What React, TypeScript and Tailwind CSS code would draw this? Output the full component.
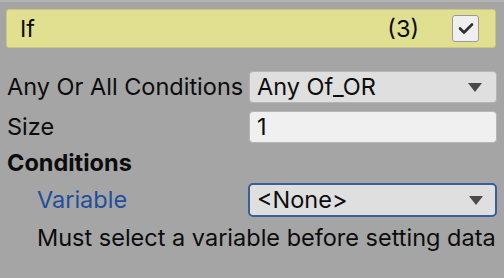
import React from "react";

function Arrow() {
  return (
    <svg width="14" height="9" viewBox="0 0 14 9">
      <polygon points="0,0 14,0 7,9" fill="#4a4a4a" />
    </svg>
  );
}

export default function App() {
  return (
    <div
      className="w-[504px] h-[278px] bg-[#a5a5a5] overflow-hidden text-[#0c0c0c] text-[23.5px]"
      style={{ fontFamily: "Inter, 'Noto Sans', sans-serif" }}
    >
      <div className="h-[2px] bg-[#b2b2b2]" />
      <div className="mt-[7px] ml-[6px] mr-[8px] h-[39px] rounded-[3px] bg-[#e1df90] border border-[#c9c67e] flex items-center pl-[13px] pr-[16px]">
        <span className="flex-1">If</span>
        <span className="mr-[33px]">(3)</span>
        <div className="w-[27px] h-[27px] rounded-[3px] bg-[#efefef] border border-[#9a9a9a] flex items-center justify-center">
          <svg width="16" height="13" viewBox="0 0 16 13">
            <polyline points="2,6.5 6,10.5 14,2.5" fill="none" stroke="#2e2e2e" strokeWidth="2.6" strokeLinecap="round" strokeLinejoin="round" />
          </svg>
        </div>
      </div>

      <div className="mt-[23px] flex items-center h-[32px]">
        <span className="w-[249px] pl-[7px] shrink-0 whitespace-nowrap">Any Or All Conditions</span>
        <div className="w-[248px] h-[32px] rounded-[4px] bg-[#dfdfdf] border border-[#b5b5b5] flex items-center pl-[7px] pr-[14px]">
          <span className="flex-1">Any Of_OR</span>
          <Arrow />
        </div>
      </div>

      <div className="mt-[8px] flex items-center h-[32px]">
        <span className="w-[249px] pl-[7px] shrink-0">Size</span>
        <div className="w-[248px] h-[32px] rounded-[4px] bg-[#f0f0f0] border border-[#b5b5b5] flex items-center pl-[7px]">
          <span>1</span>
        </div>
      </div>

      <div className="mt-[5px] h-[30px] flex items-center pl-[7px] font-bold">
        Conditions
      </div>

      <div className="mt-[5px] flex items-center h-[34px]">
        <span className="w-[248px] pl-[37px] shrink-0 text-[#1f4e9c]">Variable</span>
        <div className="w-[249px] h-[34px] rounded-[5px] bg-[#dfdfdf] border-2 border-[#3a5e98] flex items-center pl-[7px] pr-[12px]">
          <span className="flex-1">&lt;None&gt;</span>
          <Arrow />
        </div>
      </div>

      <div className="mt-[6px] h-[30px] flex items-center pl-[37px] whitespace-nowrap">
        Must select a variable before setting data
      </div>
    </div>
  );
}
